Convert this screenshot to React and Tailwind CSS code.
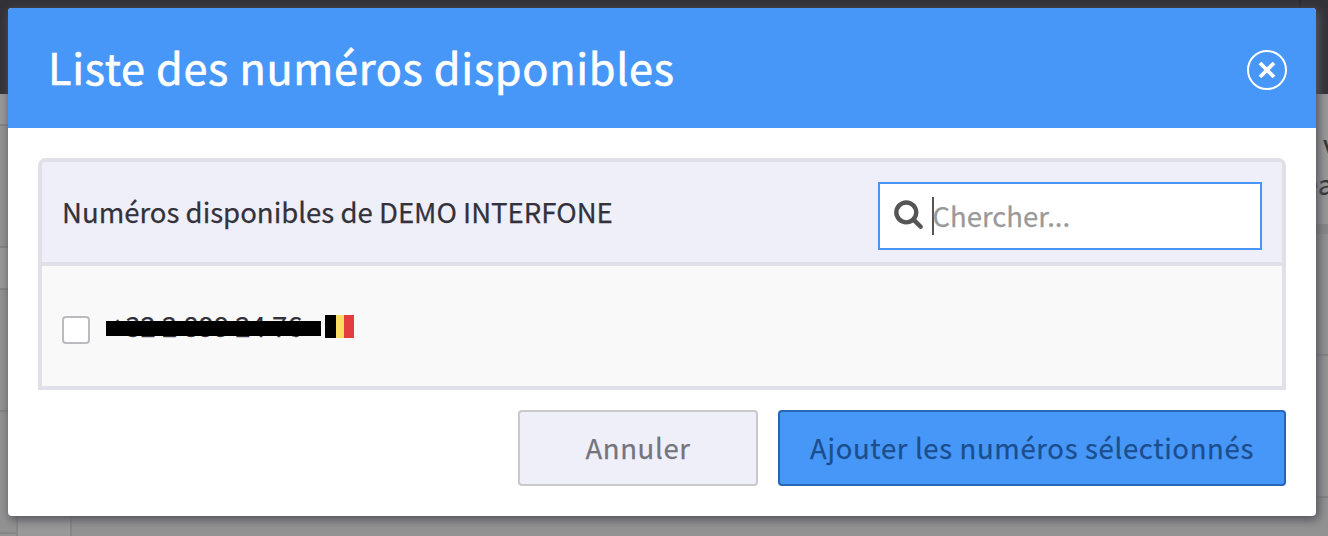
import React, { useState } from 'react';

const numbers = [{ id: 1, label: '+32 2 899 24 76', country: 'BE' }];

function SearchIcon() {
  return (
    <svg viewBox="0 0 1792 1792" fill="currentColor" className="mb-[6px] h-[31px] w-[31px] shrink-0">
      <path d="M1216 832q0-185-131.5-316.5t-316.5-131.5-316.5 131.5-131.5 316.5 131.5 316.5 316.5 131.5 316.5-131.5 131.5-316.5zm512 832q0 52-38 90t-90 38q-54 0-90-38l-343-342q-179 124-399 124-143 0-273.5-55.5t-225-150-150-225-55.5-273.5 55.5-273.5 150-225 225-150 273.5-55.5 273.5 55.5 225 150 150 225 55.5 273.5q0 220-124 399l343 343q37 37 37 90z" />
    </svg>
  );
}

function BelgianFlag() {
  return (
    <svg viewBox="0 0 29 23" className="h-[23px] w-[29px]">
      <rect width="11" height="23" fill="#000" />
      <rect x="11" width="8" height="23" fill="#fadc60" />
      <rect x="19" width="10" height="23" fill="#e33d3f" />
    </svg>
  );
}

// Dimmed page that stays visible around the dialog
function PageBehind() {
  return (
    <div className="flex h-full flex-col bg-[#929292]">
      <div className="flex h-[94px] shrink-0 justify-end bg-[#333237]">
        <div className="mr-[27px] w-[2px] bg-[#2b2a2f]" />
      </div>
      <div className="flex grow justify-between">
        <div className="flex w-[72px] flex-col">
          <div className="h-[32px] border-b-2 border-[#858585] bg-[#999]" />
          <div className="h-[122px] border-b-2 border-[#858585]" />
          <div className="h-[42px] border-b-2 border-[#858585] bg-[#999]" />
          <div className="h-[122px] border-b-2 border-[#858585]" />
          <div className="flex grow">
            <div className="w-[18px] border-r-2 border-[#878787]">
              <div className="h-[122px] border-b-2 border-[#858585]" />
            </div>
            <div className="grow border-r-2 border-[#878787] bg-[#999]" />
          </div>
        </div>
        <div className="flex w-[24px] flex-col overflow-hidden">
          <div className="h-[130px] bg-[#999] text-[27.5px] leading-[40px] text-[#333]">
            <p className="pt-[29px] pl-[19px]">v</p>
            <p className="-ml-px whitespace-nowrap">ea</p>
          </div>
          <div className="h-[10px] bg-[#888]" />
          <div className="h-[122px] border-b-2 border-[#858585]" />
          <div className="h-[142px] border-b-2 border-[#858585] bg-[#959595]" />
        </div>
      </div>
    </div>
  );
}

export default function App() {
  const [selected, setSelected] = useState([]);

  const toggle = (id) => {
    setSelected((prev) => (prev.includes(id) ? prev.filter((n) => n !== id) : [...prev, id]));
  };

  return (
    <div className="relative h-[536px] w-[1328px] overflow-hidden font-['Noto_Sans_CJK_SC',sans-serif] [-webkit-text-stroke:0.25px]">
      <PageBehind />

      <div className="absolute top-[8px] right-[12px] left-[8px] h-[508px] rounded-[4px] bg-white shadow-[2px_3px_10px_1px_#56555f]">
        <header className="flex h-[120px] items-center justify-between rounded-t-[4px] bg-[#4797f9] pr-[29px] pl-[40px]">
          <h1 className="mb-[4px] text-[43.2px] leading-[60px] tracking-[0.7px] text-white [-webkit-text-stroke:0.6px]">
            Liste des numéros disponibles
          </h1>
          <button className="mt-1 flex h-10 w-10 items-center justify-center rounded-full border-2 border-white">
            <svg viewBox="0 0 18 18" className="h-[18px] w-[18px]" stroke="#fff" strokeWidth="3.8">
              <path d="M2 2l14 14M16 2L2 16" />
            </svg>
          </button>
        </header>

        <div className="px-[30px] pt-[30px]">
          <section className="h-[232px] rounded-t-[8px] border-4 border-[#dfe0e8] bg-[#f9f9f9]">
            <div className="flex h-[104px] items-start justify-between rounded-t-[4px] border-b-4 border-[#dfe0e8] bg-[#efeff9] pt-[20px] pr-[20px] pl-[20px]">
              <h2 className="mt-[9px] text-[27.55px] leading-[40px] text-[#33323a]">
                Numéros disponibles de DEMO INTERFONE
              </h2>
              <div className="flex h-[68px] w-[384px] items-center border-2 border-[#4797f9] bg-white pl-[13px] text-[#555]">
                <SearchIcon />
                <div className="ml-[8px] h-[38px] w-[2px] bg-[#555]" />
                <span className="-ml-[1.5px] pb-[2px] text-[27.5px] leading-[40px] text-[#999]">Chercher...</span>
              </div>
            </div>

            {numbers.map((number) => (
              <div key={number.id} className="flex h-[120px] items-center pl-[20px]">
                <button
                  onClick={() => toggle(number.id)}
                  aria-pressed={selected.includes(number.id)}
                  className="mt-[8px] h-7 w-7 rounded-[4px] border-2 border-[#bbbabf] bg-white"
                />
                <div className="relative ml-[16px] w-[215px] pb-[2px] pl-[4px]">
                  <span className="text-[27.5px] leading-[40px] whitespace-nowrap text-[#33323a]">{number.label}</span>
                  <div className="absolute top-[16px] left-0 h-[15px] w-[215px] bg-black" />
                </div>
                <div className="ml-[3.5px]">
                  <BelgianFlag />
                </div>
              </div>
            ))}
          </section>

          <footer className="mt-5 flex justify-end gap-5 text-[27.5px] leading-[40px] tracking-[0.65px]">
            <button className="h-[76px] w-[240px] rounded-[4px] border-2 border-[#c9c9cb] bg-[#efeff9] pb-[2px] text-[#74747c]">
              Annuler
            </button>
            <button className="h-[76px] w-[508px] rounded-[4px] border-2 border-[#2765b9] bg-[#4797f9] pb-[2px] text-[#1c4d8c]">
              Ajouter les numéros sélectionnés
            </button>
          </footer>
        </div>
      </div>
    </div>
  );
}
